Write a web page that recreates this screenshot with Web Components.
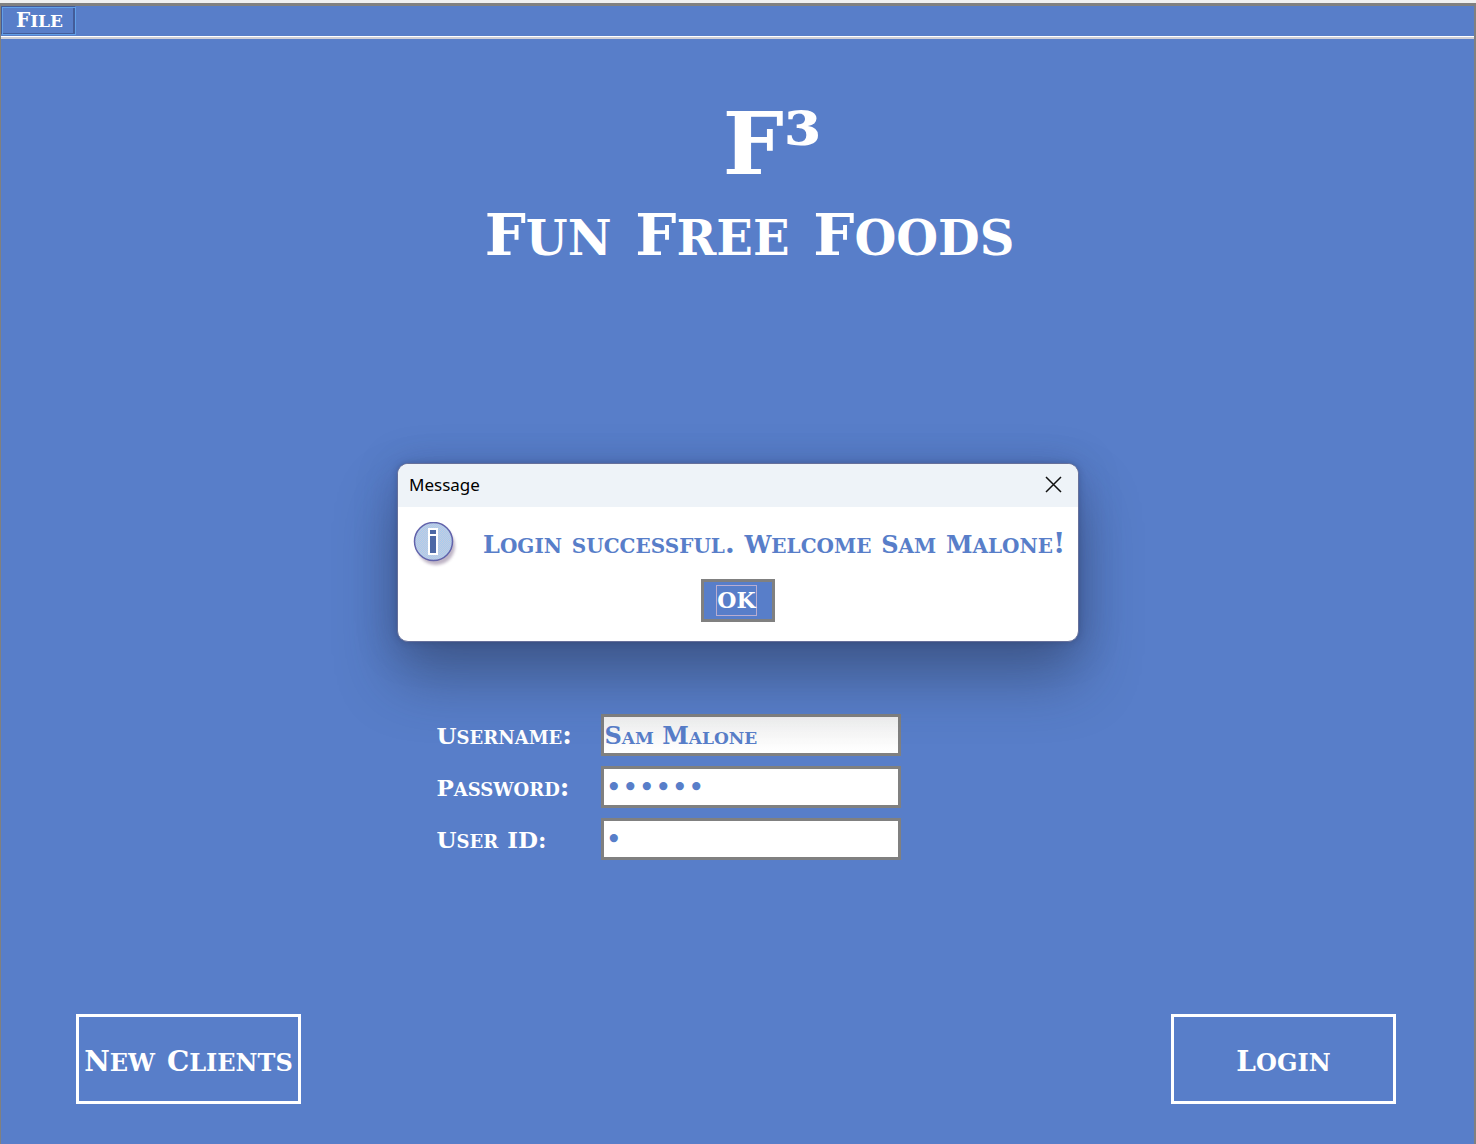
<!DOCTYPE html>
<html lang="en">
<head>
<meta charset="utf-8">
<title>Fun Free Foods</title>
<style>
html, body { margin: 0; height: 100%; }
body {
  --blue: #587ec9;
  --edge: #808080;
  --display: "DejaVu Serif", "Liberation Serif", serif;
  background: #f0f0f0;
  font-family: var(--display);
  color: #fff;
}
</style>
</head>
<body>
<app-window>
  <menu-strip slot="menu"><cap-text>File</cap-text></menu-strip>
  <brand-title slot="brand"><span slot="mark">F³</span><cap-text slot="name">Fun Free Foods</cap-text></brand-title>
  <login-form slot="form"></login-form>
  <action-button slot="actions"><cap-text>New Clients</cap-text></action-button>
  <action-button slot="actions"><cap-text>Login</cap-text></action-button>
  <message-dialog slot="dialog" heading="Message"><cap-text>Login successful. Welcome Sam Malone!</cap-text></message-dialog>
</app-window>
<script>
const define = (name, html, setup) => customElements.define(name, class extends HTMLElement {
  constructor() {
    super();
    this.attachShadow({ mode: "open" }).innerHTML = html;
  }
  connectedCallback() { if (setup) setup(this, this.shadowRoot); }
});

/* Engraved small capitals: capitals take --cap, the rest follows the inherited font size. */
define("cap-text", `
<style>
  :host { display: inline; font-variant-caps: small-caps; }
  span { display: inline-block; }
  span::first-letter { font-size: var(--cap); }
  .acronym { font-size: var(--cap); }
  .plain::first-letter { font-size: inherit; }
</style>`, (host, root) => {
  const text = host.textContent.trim();
  if (!text) return;
  host.textContent = "";
  text.split(" ").forEach((word, i) => {
    const span = document.createElement("span");
    span.textContent = word;
    if (/^[A-Z]{2}/.test(word)) span.className = "acronym";
    if (/^[a-z]/.test(word)) span.className = "plain";
    if (i) root.append(" ");
    root.append(span);
  });
});

define("app-window", `
<style>
  :host { display: flex; flex-direction: column; box-sizing: border-box; min-height: 100vh; padding-top: 3px; position: relative; }
  .frame { flex: 1; display: flex; flex-direction: column; background: var(--blue);
    border: solid var(--edge); border-width: 3px 2px 0 1px; }
  main { flex: 1; display: flex; flex-direction: column; }
  .brand { height: 235px; }
  footer { margin-top: auto; display: flex; justify-content: space-between; gap: 24px; padding: 40px 78px 40px 75px; }
  .overlay { position: absolute; inset: 0; display: flex; justify-content: center; align-items: flex-start; padding-top: 463px; }
</style>
<div class="frame">
  <slot name="menu"></slot>
  <main>
    <div class="brand"><slot name="brand"></slot></div>
    <slot name="form"></slot>
    <footer><slot name="actions"></slot></footer>
  </main>
</div>
<div class="overlay"><slot name="dialog"></slot></div>`);

define("menu-strip", `
<style>
  :host { display: block; border-bottom: 2px solid #cfcfd6; --cap: 20px; }
  nav { display: flex; height: 30px; border-bottom: 1px solid #fff; }
  button { box-sizing: border-box; width: 75px; height: 29px; padding: 0 2px 2px 4px; border: 1px solid #435c99;
    border-right-color: #62a0e8; border-bottom-color: #62a0e8;
    box-shadow: inset 1px 1px #62a0e8, inset -2px -1px #435c99;
    background: var(--blue); color: #fff; font: bold 24px/24px var(--display); }
</style>
<nav><button type="button"><slot></slot></button></nav>`);

define("brand-title", `
<style>
  :host { display: block; --cap: 58px; }
  header { display: flex; flex-direction: column; align-items: center; padding: 60px 0 0 24px; }
  h1, h2 { margin: 0; font-weight: bold; white-space: nowrap; }
  h1 { font-size: 86px; line-height: 90px; padding-left: 45px; }
  h2 { font-size: 68px; line-height: 84px; }
</style>
<header><h1><slot name="mark"></slot></h1><h2><slot name="name"></slot></h2></header>`);

define("login-form", `
<style>
  :host { display: block; margin-top: 440px; --cap: 23px; }
  form { display: grid; grid-template-columns: 164px 300px; grid-auto-rows: 42px; row-gap: 10px;
    justify-content: center; align-items: center; padding-right: 138px; }
  label { font: bold 26px/42px var(--display); white-space: nowrap; }
  input { box-sizing: border-box; width: 100%; height: 42px; margin: 0; padding: 0 1px; border: 3px solid var(--edge);
    border-radius: 0; background: #fff; color: var(--blue); font: bold 24px/36px var(--display); font-variant-caps: small-caps; outline: 0; }
  #user { background: linear-gradient(#f1f1f1, #fff); }
  input[type=password] { padding: 0 2px; font-size: 28px; font-weight: normal; }
</style>
<form>
  <label for="user"><cap-text>Username:</cap-text></label><input id="user" type="text" value="Sam Malone">
  <label for="pass"><cap-text>Password:</cap-text></label><input id="pass" type="password" value="cheers">
  <label for="uid"><cap-text>User ID:</cap-text></label><input id="uid" type="password" value="1">
</form>`);

define("action-button", `
<style>
  :host { display: block; --cap: 28px; }
  button { width: 225px; height: 90px; padding: 2px 0 0; border: 3px solid #fff; background: var(--blue); color: #fff;
    font: bold 34px/36px var(--display); white-space: nowrap; }
</style>
<button type="button"><slot></slot></button>`);

define("info-icon", `
<style>:host { display: block; width: 48px; height: 50px; } svg { display: block; }</style>
<svg width="48" height="50" viewBox="0 0 48 50" aria-hidden="true">
  <defs>
    <filter id="soft" x="-30%" y="-30%" width="160%" height="160%"><feGaussianBlur stdDeviation="1.6"/></filter>
    <pattern id="dots" width="2" height="2" patternUnits="userSpaceOnUse"><path d="M0 0h2v2H0z" fill="#c8cade"/><path d="M0 0h1v1H0zM1 1h1v1H1z" fill="#a4cdf0"/></pattern>
  </defs>
  <circle cx="23" cy="24" r="19" fill="#94839f" opacity=".6" filter="url(#soft)"/>
  <circle cx="20.500" cy="19.500" r="19" fill="url(#dots)" stroke="#6263ab" stroke-width="1.500"/>
  <path d="M15 6h10v27H15z" fill="#fff"/>
  <path d="M17 8h6v4h-6zM17 14h6v17h-6z" fill="#4d68a5"/>
</svg>`);

define("message-dialog", `
<style>
  :host { display: block; --cap: 24px; }
  dialog { position: static; box-sizing: border-box; width: 682px; max-width: 100vw; margin: 0; padding: 0; overflow: hidden;
    border: 1px solid #66709a; border-radius: 11px; background: #fff; color: #000;
    box-shadow: 0 0 6px rgba(40,50,90,.3), 0 36px 60px rgba(35,48,70,.42), 0 4px 40px rgba(40,55,110,.28); }
  header { display: flex; justify-content: space-between; align-items: center; box-sizing: border-box; height: 43px; padding: 0 16px 2px 11px; background: #eef3f8; }
  h3 { margin: 0; font: 17px/24px "Noto Sans", "Open Sans", sans-serif; }
  .close { width: 17px; height: 17px; padding: 0; border: 0; background: none; }
  .close svg { display: block; }
  .body { display: flex; align-items: flex-start; gap: 22px; height: 57px; padding: 15px 12px 0 15px; }
  p { margin: 0; font: bold 28px/44px var(--display); color: var(--blue); white-space: nowrap; }
  .foot { display: flex; justify-content: center; padding-bottom: 19px; }
  .ok { display: flex; align-items: center; justify-content: center; width: 74px; height: 43px; padding: 0 3px 0 0;
    border: 3px solid var(--edge); background: var(--blue); color: #fff; font: bold 22px/29px var(--display); }
  .ok span { border: 1px solid #b9add0; }
</style>
<dialog open aria-labelledby="h">
  <header><h3 id="h"></h3>
    <button class="close" type="button" aria-label="Close"><svg width="17" height="17" viewBox="0 0 17 17"><path d="M1 1l15 15M16 1L1 16" stroke="#111" stroke-width="1.500" fill="none"/></svg></button>
  </header>
  <div class="body"><info-icon></info-icon><p><slot></slot></p></div>
  <div class="foot"><button class="ok" type="button"><span>OK</span></button></div>
</dialog>`, (host, root) => { root.querySelector("h3").textContent = host.getAttribute("heading"); });
</script>
</body>
</html>
